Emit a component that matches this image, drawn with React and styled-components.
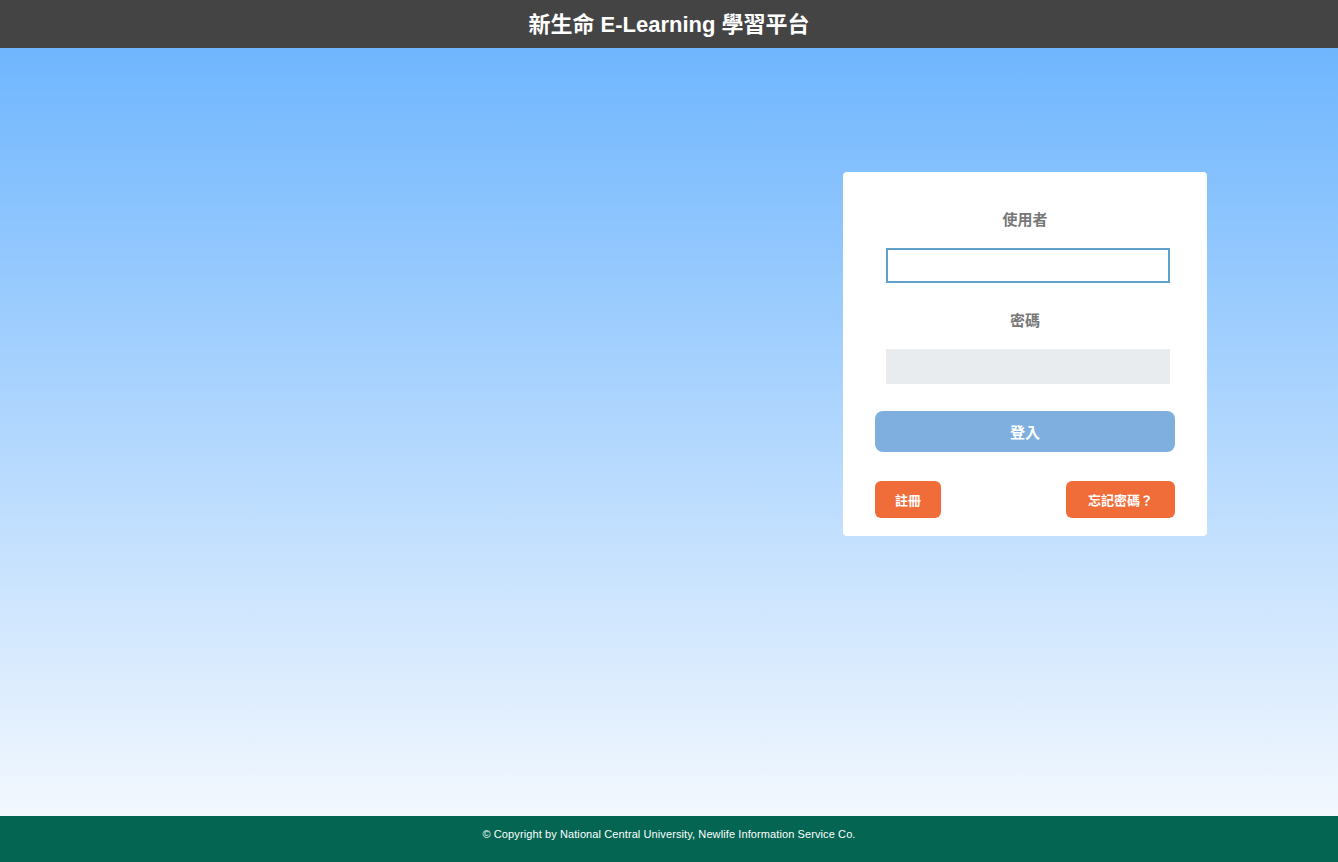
import React from 'react';
import styled, { createGlobalStyle } from 'styled-components';

const GlobalStyle = createGlobalStyle`
    html, body {
        margin: 0;
        padding: 0;
        height: 100%;
    }
    body {
        font-family: "Liberation Sans", "Noto Sans CJK TC", sans-serif;
    }
    #root {
        height: 100%;
    }
`;

export default function App() {
    return (
        <>
            <GlobalStyle />
            <Page>
                <Header>新生命 E-Learning 學習平台</Header>
                <Main>
                    <LoginCard>
                        <Label>使用者</Label>
                        <Input type="text" $focused />
                        <Label $gap={28}>密碼</Label>
                        <Input type="password" />
                        <LoginButton>登入</LoginButton>
                        <ActionRow>
                            <SmallButton $pad={20}>註冊</SmallButton>
                            <SmallButton $pad={22}>忘記密碼？</SmallButton>
                        </ActionRow>
                    </LoginCard>
                </Main>
                <Footer>© Copyright by National Central University, Newlife Information Service Co.</Footer>
            </Page>
        </>
    );
}

const Page = styled.div`
    display: flex;
    flex-direction: column;
    height: 862px;
`;

const Header = styled.header`
    height: 48px;
    flex-shrink: 0;
    box-sizing: border-box;
    padding-bottom: 4px;
    background: #444444;
    color: #ffffff;
    font-size: 22px;
    font-weight: 700;
    display: flex;
    justify-content: center;
    align-items: center;
`;

const Main = styled.main`
    flex: 1;
    background: linear-gradient(180deg, #6fb6fe 0%, #f3f8fe 100%);
    display: flex;
    justify-content: flex-end;
    align-items: flex-start;
    padding: 124px 131px 0 0;
`;

const LoginCard = styled.div`
    width: 364px;
    box-sizing: border-box;
    background: #ffffff;
    border-radius: 4px;
    padding: 38px 32px 18px;
    display: flex;
    flex-direction: column;
    align-items: center;
`;

const Label = styled.div`
    margin-top: ${props => props.$gap || 0}px;
    font-size: 15px;
    line-height: 20px;
    font-weight: 700;
    color: #777777;
    margin-bottom: 18px;
`;

const Input = styled.input`
    width: 284px;
    height: 35px;
    box-sizing: border-box;
    margin: 0 0 0 6px;
    border: ${props => props.$focused ? '2px solid #5ea0c9' : 'none'};
    background: ${props => props.$focused ? '#ffffff' : '#e9ecef'};
    outline: none;
    padding: 0 8px;
    font-size: 14px;
`;

const LoginButton = styled.button`
    margin-top: 27px;
    width: 100%;
    height: 41px;
    border: none;
    border-radius: 8px;
    background: #7fafdf;
    color: #ffffff;
    font-family: inherit;
    font-size: 15px;
    font-weight: 700;
`;

const ActionRow = styled.div`
    margin-top: 29px;
    width: 100%;
    display: flex;
    justify-content: space-between;
`;

const SmallButton = styled.button`
    height: 37px;
    padding: 0 ${props => props.$pad}px;
    border: none;
    border-radius: 6px;
    background: #f06d3a;
    color: #ffffff;
    font-family: inherit;
    font-size: 13px;
    font-weight: 700;
`;

const Footer = styled.footer`
    height: 46px;
    flex-shrink: 0;
    background: #036552;
    color: #ffffff;
    font-size: 11px;
    letter-spacing: 0.1px;
    text-align: center;
    padding-top: 12px;
    box-sizing: border-box;
`;
